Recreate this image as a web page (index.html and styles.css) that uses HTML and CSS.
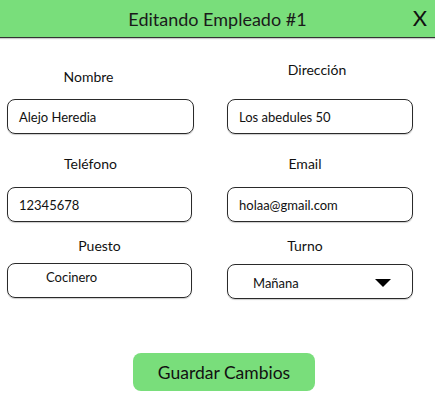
FILE: index.html
```html
<!DOCTYPE html>
<html lang="es">
<head>
<meta charset="utf-8">
<title>Editando Empleado #1</title>
<link rel="stylesheet" href="styles.css">
</head>
<body>
<header class="topbar">
  <h1 class="title">Editando Empleado #1</h1>
  <span class="close">X</span>
</header>
<main class="form">
  <div class="field f-nombre">
    <label class="label">Nombre</label>
    <div class="input">Alejo Heredia</div>
  </div>
  <div class="field f-dir">
    <label class="label">Dirección</label>
    <div class="input">Los abedules 50</div>
  </div>
  <div class="field f-tel">
    <label class="label">Teléfono</label>
    <div class="input narrow">12345678</div>
  </div>
  <div class="field f-email">
    <label class="label">Email</label>
    <div class="input">holaa@gmail.com</div>
  </div>
  <div class="field f-puesto">
    <label class="label">Puesto</label>
    <div class="input narrow puesto-input">Cocinero</div>
  </div>
  <div class="field f-turno">
    <label class="label">Turno</label>
    <div class="input select"><span>Mañana</span><span class="caret"></span></div>
  </div>
</main>
<div class="actions">
  <button class="save">Guardar Cambios</button>
</div>
</body>
</html>
```
FILE: styles.css
```css
* { box-sizing: border-box; }
body {
  margin: 0;
  font-family: Lato, "Open Sans", sans-serif;
  color: #111;
  background: #fff;
}
.topbar {
  height: 38px;
  background: #79de7b;
  border-bottom: 1px solid #333;
  box-shadow: 0 1px 1px rgba(0,0,0,0.2);
  display: flex;
  align-items: center;
  justify-content: center;
  position: relative;
}
.title {
  margin: 0;
  font-size: 18px;
  font-weight: 400;
  color: #1a1a1a;
  padding-top: 1px;
}
.close {
  position: absolute;
  right: 8px;
  top: 6px;
  font-size: 22px;
  line-height: 24px;
  color: #111;
}
.form {
  display: grid;
  grid-template-columns: 187px 186px;
  column-gap: 33px;
  padding: 0 22px 0 7px;
}
.field {
  display: flex;
  flex-direction: column;
}
.label {
  font-size: 14px;
  line-height: 17px;
  text-align: center;
  color: #111;
}
.input {
  height: 35px;
  border: 1px solid #2a2a2a;
  border-radius: 8px;
  box-shadow: 0 1px 1px rgba(0,0,0,0.2);
  font-size: 13px;
  display: flex;
  align-items: center;
  padding: 0 11px;
  color: #111;
}
.narrow { width: 185px; }
.f-nombre .label { margin: 30px 0 14px; padding-right: 24px; }
.f-dir .label { margin: 23px 0 21px; padding-right: 6px; }
.f-tel .label { margin: 21px 0 15px; padding-right: 20px; }
.f-email .label { margin: 21px 0 15px; padding-right: 30px; }
.f-puesto .label { margin: 15px 0 9px; padding-right: 2px; }
.f-turno .label { margin: 15px 0 10px; padding-right: 30px; }
.puesto-input { padding-left: 38px; align-items: flex-start; padding-top: 5px; }
.select {
  justify-content: space-between;
  padding: 2px 21px 0 25px;
}
.caret {
  width: 0;
  height: 0;
  border-left: 8px solid transparent;
  border-right: 8px solid transparent;
  border-top: 8px solid #000;
  margin-top: 0;
}
.actions {
  display: flex;
  justify-content: center;
  padding: 54px 0 0 13px;
}
.save {
  width: 182px;
  height: 38px;
  background: #79de7b;
  border: none;
  border-radius: 8px;
  font-family: Lato, "Open Sans", sans-serif;
  font-size: 17.5px;
  color: #111;
}
```
